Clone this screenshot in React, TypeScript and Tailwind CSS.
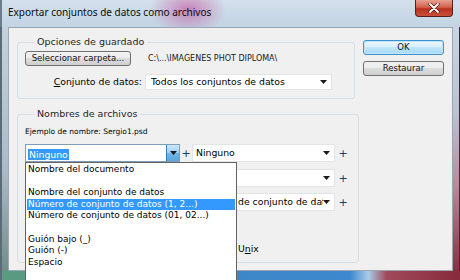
import React from 'react';

const ui = { fontFamily: '"DejaVu Sans", Verdana, sans-serif' };

const Arrow = ({ className = '' }: { className?: string }) => (
  <svg width="7" height="4" viewBox="0 0 7 4" className={className}>
    <path d="M0 0 H7 L3.5 4 Z" fill="#1a1a1a" />
  </svg>
);

const Plus = () => (
  <span className="text-[11px] leading-none text-[#1d3c6e] text-center">+</span>
);

const Combo = ({ text, className = '' }: { text?: string; className?: string }) => (
  <div className={`h-[18px] bg-white border border-[#e2e4e8] flex items-center pl-[3px] pr-[4px] overflow-hidden ${className}`}>
    <span className="flex-1 text-[9.3px] whitespace-nowrap overflow-hidden">{text}</span>
    <Arrow />
  </div>
);

const WinButton = ({ label, primary = false, className = '' }: { label: string; primary?: boolean; className?: string }) => (
  <div
    className={`h-[15px] rounded-[3px] border flex items-center justify-center text-[8.5px] text-[#111] ${
      primary
        ? 'border-[#3c8fd0] bg-[linear-gradient(to_bottom,#eaf6fd,#d9f0fc_50%,#bee6fd_50%,#a7d9f5)] shadow-[inset_0_0_0_1px_#c4e6fa]'
        : 'border-[#707070] bg-[linear-gradient(to_bottom,#f2f2f2,#ebebeb_50%,#dddddd_50%,#cfcfcf)]'
    } ${className}`}
  >
    {label}
  </div>
);

const listItems: (string | null)[] = [
  'Nombre del documento',
  null,
  'Nombre del conjunto de datos',
  'Número de conjunto de datos (1, 2...)',
  'Número de conjunto de datos (01, 02...)',
  null,
  'Guión bajo (_)',
  'Guión (-)',
  'Espacio',
  null,
  null,
];

export default function App() {
  return (
    <div className="w-[460px] h-[280px] relative overflow-hidden flex flex-col text-black" style={ui}>
      {/* title bar */}
      <div className="h-[27px] flex items-start bg-[radial-gradient(ellipse_38px_24px_at_186px_10px,rgba(196,70,150,0.6),transparent),linear-gradient(to_bottom,#d3e0ec,#c2d3e3)] border-l-2 border-[#6c7c8c]">
        <span className="pl-[6px] pt-[5px] flex-1 text-[10px] leading-[14px] text-[#0b0b0b]" style={{ fontFamily: '"Noto Sans", sans-serif' }}>
          Exportar conjuntos de datos como archivos
        </span>
        <div className="mr-[7px] w-[38px] h-[17px] rounded-b-[4px] border border-t-0 border-[#5b1f1a] bg-[linear-gradient(to_bottom,#e8a090,#d2604c_45%,#b7321f_55%,#c8503a)] flex items-center justify-center">
          <svg width="12" height="10" viewBox="0 0 12 10">
            <path d="M2 1 L10 9 M10 1 L2 9" stroke="#4a1410" strokeWidth="3.2" strokeLinecap="round" />
            <path d="M2 1 L10 9 M10 1 L2 9" stroke="#ffffff" strokeWidth="1.8" strokeLinecap="round" />
          </svg>
        </div>
      </div>

      {/* middle row */}
      <div className="h-[244px] flex">
        <div className="w-[8px] border-l-2 border-[#5d6b78] bg-[linear-gradient(to_bottom,#c4d2de,#a9b9c7_60%,#6f8f86)]" />
        <div className="flex-1 border border-[#9aa6b2] bg-[#f0f0f0] flex">
          {/* left column */}
          <div className="pl-[8px] w-[346px] flex flex-col">
            <fieldset className="mt-[8px] h-[63px] border border-[#d5dfe5] rounded-[3px] px-[7px]">
              <legend className="ml-[9px] px-[3px] text-[9.5px] leading-[12px] text-[#1e1e1e]">Opciones de guardado</legend>
              <div className="mt-[3px] flex items-center">
                <WinButton label="Seleccionar carpeta..." className="w-[106px]" />
                <span className="ml-[17px] text-[8px] text-[#1a1a1a]">C:\...\IMAGENES PHOT DIPLOMA\</span>
              </div>
              <div className="mt-[8px] flex items-center">
                <span className="w-[117px] text-right text-[9.3px]">
                  <span className="underline">C</span>onjunto de datos:
                </span>
                <Combo text="Todos los conjuntos de datos" className="ml-[3px] w-[187px] !h-[16px] pl-[5px]" />
              </div>
            </fieldset>

            <fieldset className="mt-[9px] h-[155px] border border-[#d5dfe5] rounded-[3px] px-[7px]">
              <legend className="ml-[9px] px-[3px] text-[9.5px] leading-[12px] text-[#1e1e1e]">Nombres de archivos</legend>
              <div className="mt-[6px] h-[12px] text-[7.5px] leading-[12px]">Ejemplo de nombre: Sergio1.psd</div>
              <div className="mt-[6px] flex items-center">
                <div className="w-[155px] h-[18px] bg-white border border-[#7f9db9] flex items-center pl-[2px]">
                  <span className="flex-1">
                    <span className="bg-[#3399ff] text-white text-[9.3px] px-[1px]">Ninguno</span>
                  </span>
                  <div className="w-[13px] h-full border-l border-[#3c7fb1] bg-[linear-gradient(to_bottom,#cfe9fb,#9ccff4_50%,#70b5e8_50%,#5aa6df)] flex items-center justify-center">
                    <Arrow />
                  </div>
                </div>
                <span className="w-[12px] flex justify-center"><Plus /></span>
                <Combo text="Ninguno" className="w-[143px]" />
                <span className="w-[16px] flex justify-center"><Plus /></span>
              </div>
              <div className="mt-[7px] flex items-center">
                <Combo className="w-[155px]" />
                <span className="w-[12px] flex justify-center"><Plus /></span>
                <Combo className="w-[143px]" />
                <span className="w-[16px] flex justify-center"><Plus /></span>
              </div>
              <div className="mt-[6px] flex items-center">
                <Combo className="w-[155px]" />
                <span className="w-[12px] flex justify-center"><Plus /></span>
                <div className="w-[143px] h-[18px] bg-white border border-[#e2e4e8] flex items-center pr-[4px] overflow-hidden">
                  <span className="flex-1 text-[9.3px] whitespace-nowrap overflow-hidden pl-[45px]">de conjunto de datos</span>
                  <Arrow />
                </div>
                <span className="w-[16px] flex justify-center"><Plus /></span>
              </div>
              <div className="mt-[32px] h-[12px] flex items-center text-[9.3px] leading-[12px]">
                <span className="ml-[213px]">
                  U<span className="underline">n</span>ix
                </span>
              </div>
            </fieldset>
          </div>

          {/* right column */}
          <div className="ml-[8px] w-[81px] flex flex-col">
            <WinButton label="OK" primary className="mt-[12px]" />
            <WinButton label="Restaurar" className="mt-[6px]" />
          </div>
        </div>
        <div className="w-[7px] border-r border-[#4a2430] bg-[linear-gradient(to_bottom,#c6d6e4,#b8c4d2_35%,#b88a9c_65%,#8a2e42)]" />
      </div>

      {/* bottom frame */}
      <div className="h-[9px] border-l-2 border-[#5d6b78] bg-[linear-gradient(to_right,#5a9c7e,#3e86c4_45%,#3d88cf_76%,#a8cce8_80%,#a04a5c_84%,#872a3c)]" />

      {/* open dropdown list */}
      <div className="absolute left-[25px] top-[162px] w-[212px] h-[130px] bg-white border border-[#646464] pt-[1px] pl-[1px] pr-[1px]">
        {listItems.map((t, i) => (
          <div
            key={i}
            className={`h-[11.6px] leading-[11.6px] pl-[1px] text-[9px] whitespace-nowrap ${i === 3 ? 'bg-[#3399ff] text-white' : ''}`}
          >
            {t ?? '\u00a0'}
          </div>
        ))}
      </div>
    </div>
  );
}
